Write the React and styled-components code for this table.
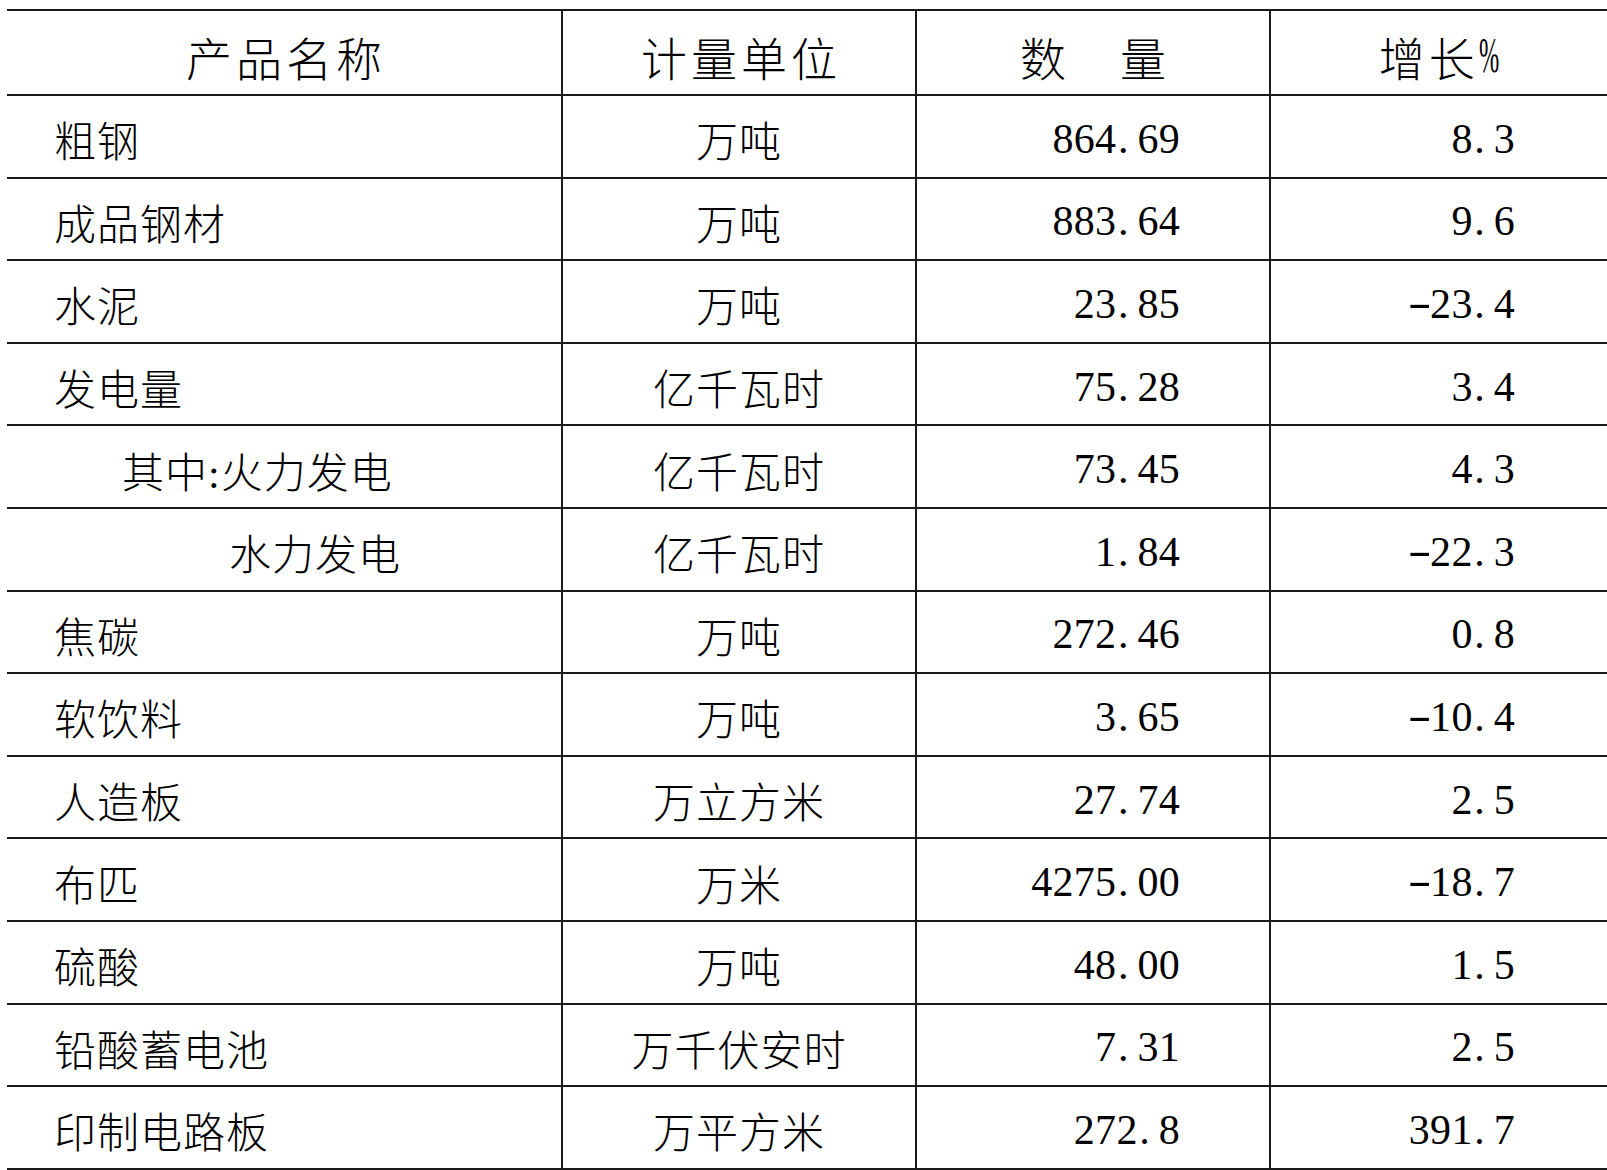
import styled, { createGlobalStyle } from "styled-components";

const GlobalStyle = createGlobalStyle`
  html, body {
    margin: 0;
    padding: 0;
    overflow: hidden;
    background: #fff;
  }
  body {
    font-family: "Liberation Serif", "Noto Sans CJK SC", serif;
    color: #000;
  }
`;

const LINE = "2px solid #1a1a1a";
const COLUMNS = "556px 354px 354px 337px";

const Page = styled.div`
  padding: 9px 0 0 7px;
`;

const Table = styled.div`
  width: 1601px;
  border-top: ${LINE};
`;

const Row = styled.div`
  display: grid;
  grid-template-columns: ${COLUMNS};
  height: ${(props) => (props.$header ? "85px" : "82.6px")};
  border-bottom: ${LINE};
  box-sizing: border-box;
`;

const Cell = styled.div`
  display: flex;
  align-items: center;
  box-sizing: border-box;
  padding-top: 5px;
  border-right: ${(props) => (props.$last ? "none" : LINE)};
  font-size: 42px;
  font-weight: 300;
  letter-spacing: 1px;
  white-space: pre;
`;

const HeadCell = styled(Cell)`
  justify-content: center;
  font-size: 46px;
  letter-spacing: 4px;
  padding-top: 7px;
  padding-left: 4px;
`;

const NameCell = styled(Cell)`
  padding-left: ${(props) => 47 + (props.$indent || 0)}px;
`;

const UnitCell = styled(Cell)`
  justify-content: center;
`;

const NumCell = styled(Cell)`
  justify-content: flex-end;
  padding-right: ${(props) => props.$pad}px;
  letter-spacing: 0.3px;
  font-weight: 400;
`;

const Dot = styled.span`
  display: inline-block;
  width: 0.5em;
  padding-left: 0.04em;
  box-sizing: border-box;
`;

const Minus = styled.span`
  display: inline-block;
  width: 0.5em;
  transform: translateY(-2px) scaleX(1.7);
  transform-origin: 0.04em 50%;
`;

const Percent = styled.span`
  display: inline-block;
  width: 0.5em;
  font-size: 1.1em;
  letter-spacing: 0;
  font-family: "Liberation Serif", serif;
  transform: translateY(-1px) scaleX(0.48);
  transform-origin: left center;
`;

const rows = [
  { name: "粗钢", unit: "万吨", qty: "864.69", growth: "8.3" },
  { name: "成品钢材", unit: "万吨", qty: "883.64", growth: "9.6" },
  { name: "水泥", unit: "万吨", qty: "23.85", growth: "-23.4" },
  { name: "发电量", unit: "亿千瓦时", qty: "75.28", growth: "3.4" },
  { name: "其中:火力发电", indent: 68, unit: "亿千瓦时", qty: "73.45", growth: "4.3" },
  { name: "水力发电", indent: 175, unit: "亿千瓦时", qty: "1.84", growth: "-22.3" },
  { name: "焦碳", unit: "万吨", qty: "272.46", growth: "0.8" },
  { name: "软饮料", unit: "万吨", qty: "3.65", growth: "-10.4" },
  { name: "人造板", unit: "万立方米", qty: "27.74", growth: "2.5" },
  { name: "布匹", unit: "万米", qty: "4275.00", growth: "-18.7" },
  { name: "硫酸", unit: "万吨", qty: "48.00", growth: "1.5" },
  { name: "铅酸蓄电池", unit: "万千伏安时", qty: "7.31", growth: "2.5" },
  { name: "印制电路板", unit: "万平方米", qty: "272.8", growth: "391.7" },
];

// half-width cells for the punctuation, like the old song-style digits
const Num = ({ value }) =>
  value.split("").map((ch, i) => {
    if (ch === ".") return <Dot key={i}>.</Dot>;
    if (ch === "-") return <Minus key={i}>-</Minus>;
    return ch;
  });

export default function App() {
  return (
    <>
      <GlobalStyle />
      <Page>
        <Table>
          <Row $header>
            <HeadCell>产品名称</HeadCell>
            <HeadCell>计量单位</HeadCell>
            <HeadCell>数　量</HeadCell>
            <HeadCell $last>
              增长<Percent>%</Percent>
            </HeadCell>
          </Row>
          {rows.map((r) => (
            <Row key={r.name}>
              <NameCell $indent={r.indent}>{r.name}</NameCell>
              <UnitCell>{r.unit}</UnitCell>
              <NumCell $pad={89}>
                <Num value={r.qty} />
              </NumCell>
              <NumCell $pad={93} $last>
                <Num value={r.growth} />
              </NumCell>
            </Row>
          ))}
        </Table>
      </Page>
    </>
  );
}
